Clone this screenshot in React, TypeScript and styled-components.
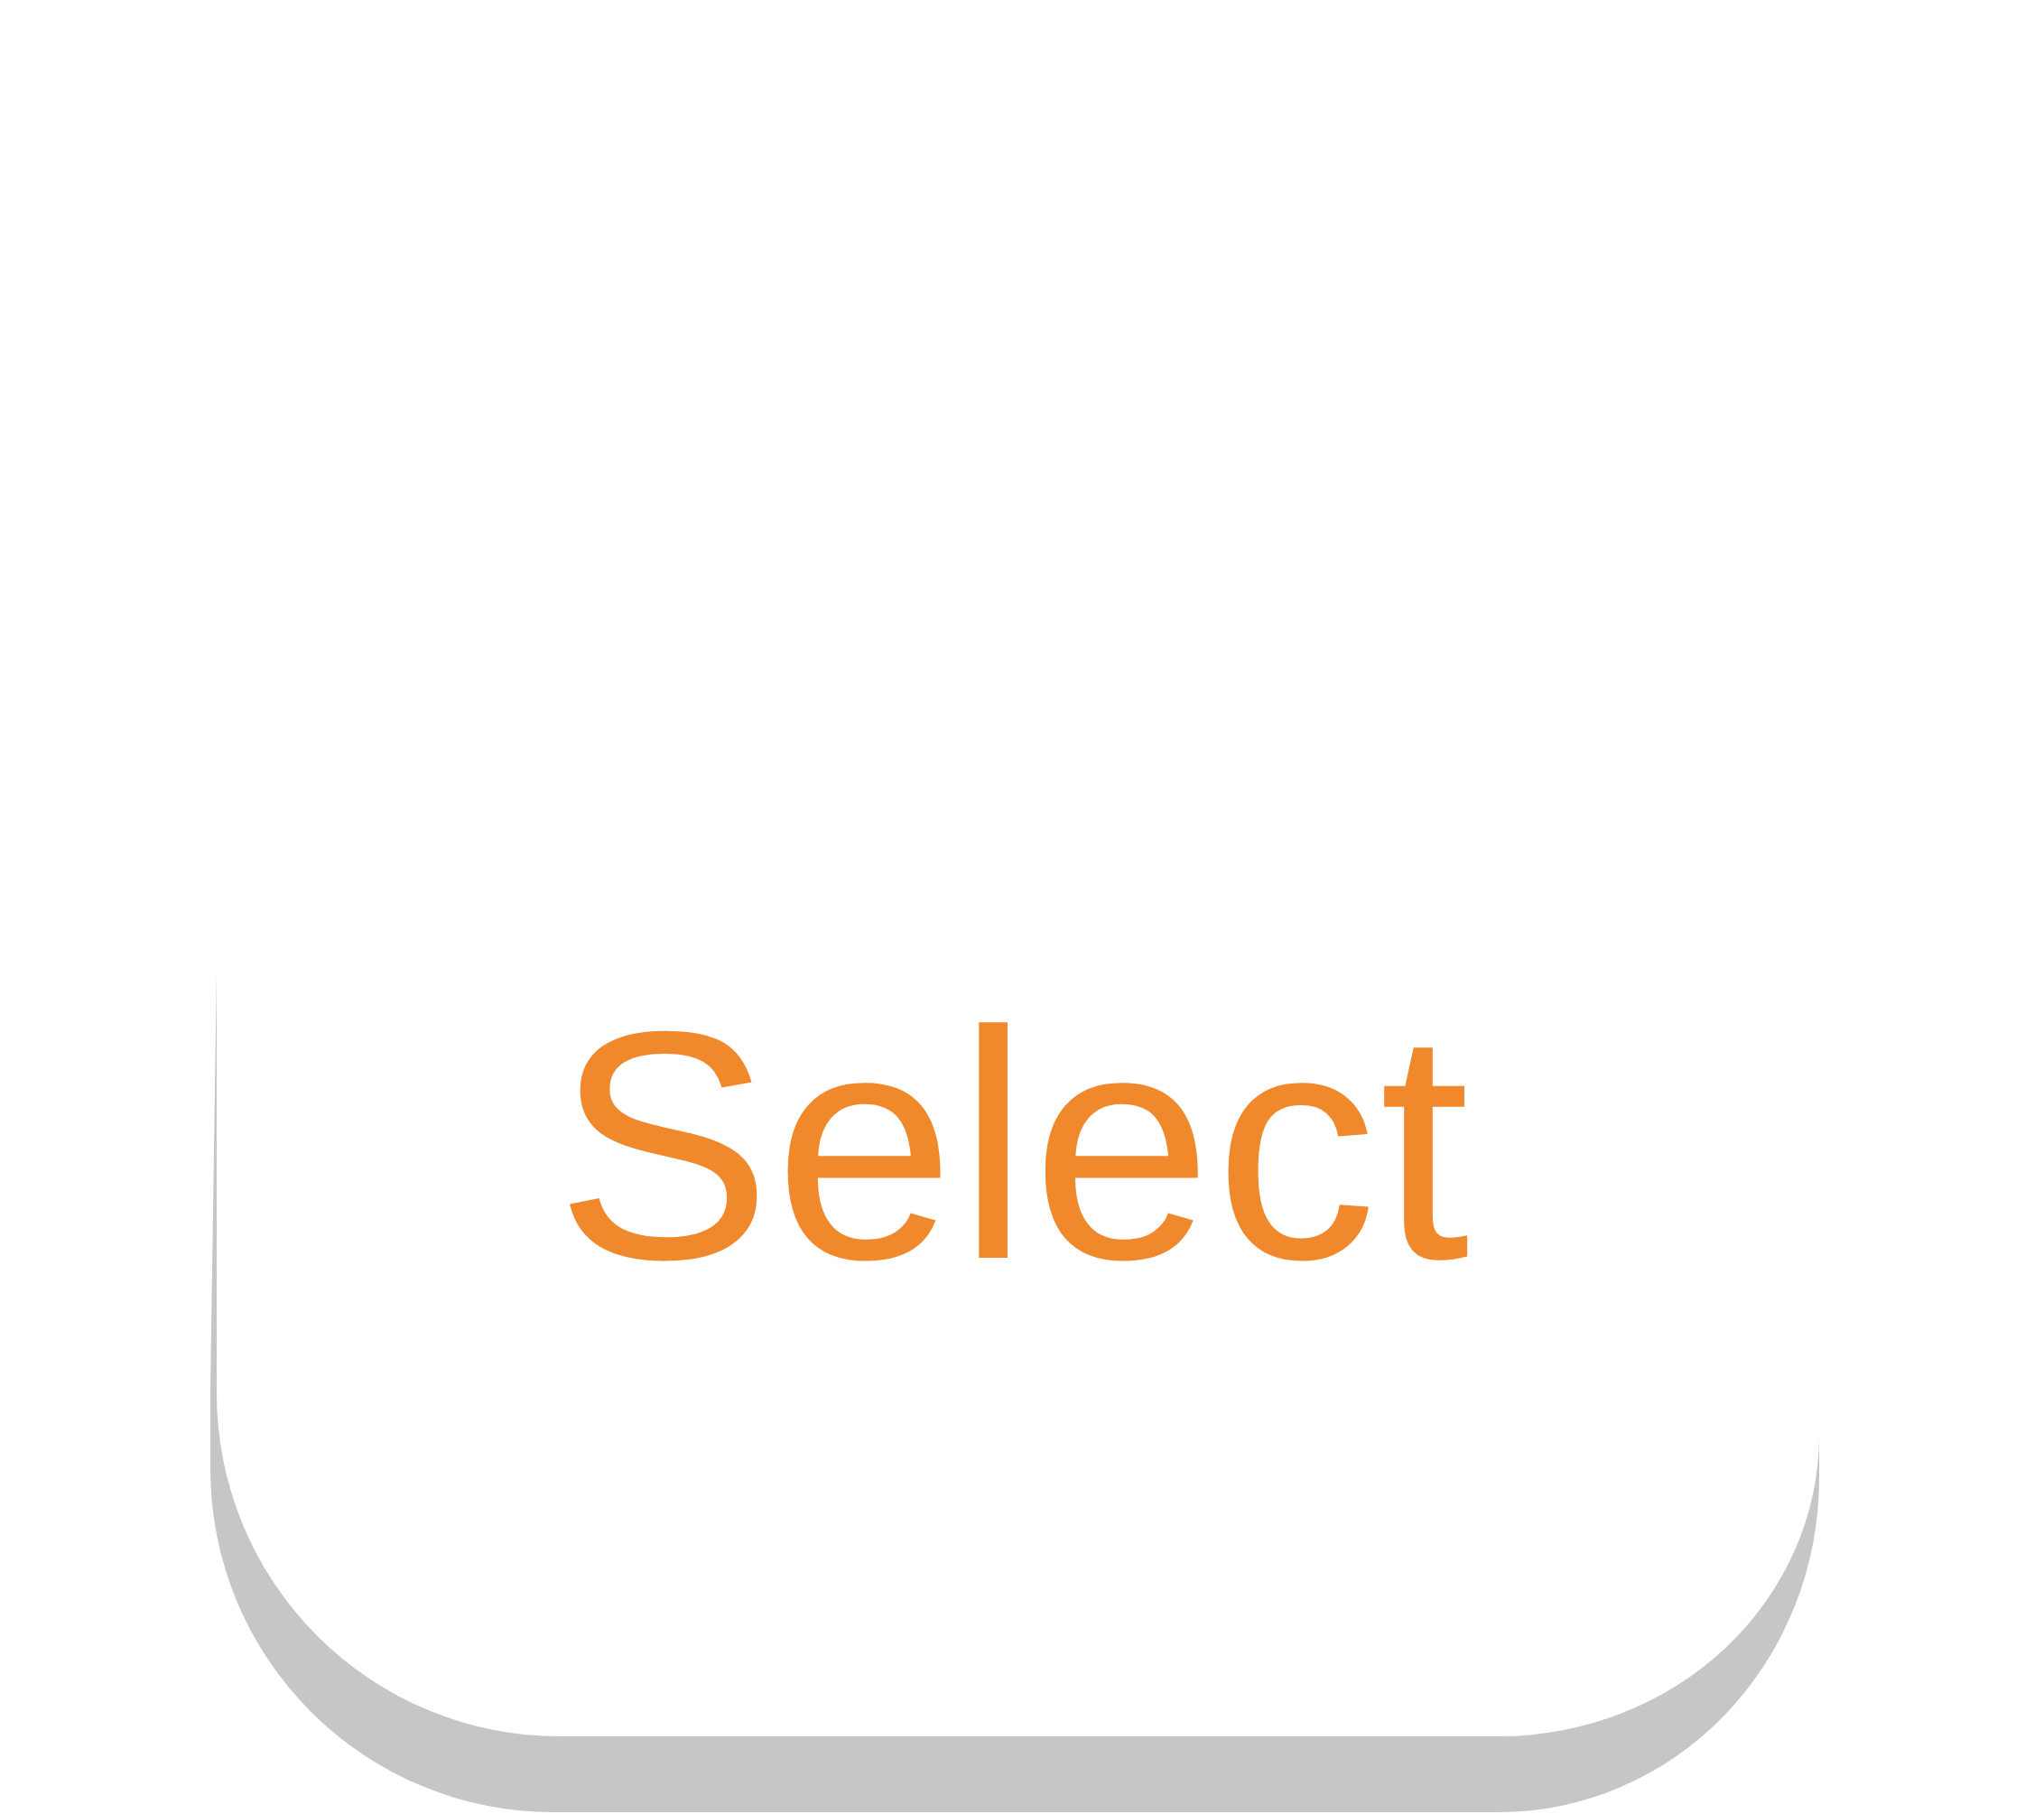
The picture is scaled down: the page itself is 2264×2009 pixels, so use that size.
import React from "react";
import styled, { createGlobalStyle } from "styled-components";

const GlobalStyle = createGlobalStyle`
  html, body {
    margin: 0;
    padding: 0;
    background: #ffffff;
  }
  *, *::before, *::after {
    box-sizing: border-box;
  }
`;

const Page = styled.div`
  position: relative;
  isolation: isolate;
  width: 2264px;
  height: 2009px;
  padding: 0 249px 0 240px;
  overflow: hidden;
  background: #ffffff;
`;

const Key = styled.button`
  position: relative;
  display: flex;
  align-items: flex-end;
  justify-content: center;
  width: 100%;
  height: 1923px;
  margin: 0;
  padding: 0 0 475px 0;
  border: none;
  outline: none;
  background: #ffffff;
  border-bottom-left-radius: 380px;
  border-bottom-right-radius: 355px 334px;
  cursor: pointer;

  &::before {
    content: "";
    position: absolute;
    top: 1074px;
    left: -7px;
    right: 0;
    bottom: -84px;
    z-index: -1;
    background: #c6c6c6;
    border-bottom-left-radius: 380px;
    border-bottom-right-radius: 355px 370px;
    clip-path: polygon(7px 0, 100% 0, 100% 100%, 0 100%, 0 466px);
  }
`;

const Label = styled.span`
  display: block;
  margin-right: 10px;
  font-family: "Liberation Sans", Arial, Helvetica, sans-serif;
  font-size: 360px;
  line-height: 1;
  font-weight: 400;
  letter-spacing: 2.5px;
  color: #ef892b;
  white-space: nowrap;
`;

export default function App() {
  return (
    <>
      <GlobalStyle />
      <Page>
        <Key type="button">
          <Label>Select</Label>
        </Key>
      </Page>
    </>
  );
}
